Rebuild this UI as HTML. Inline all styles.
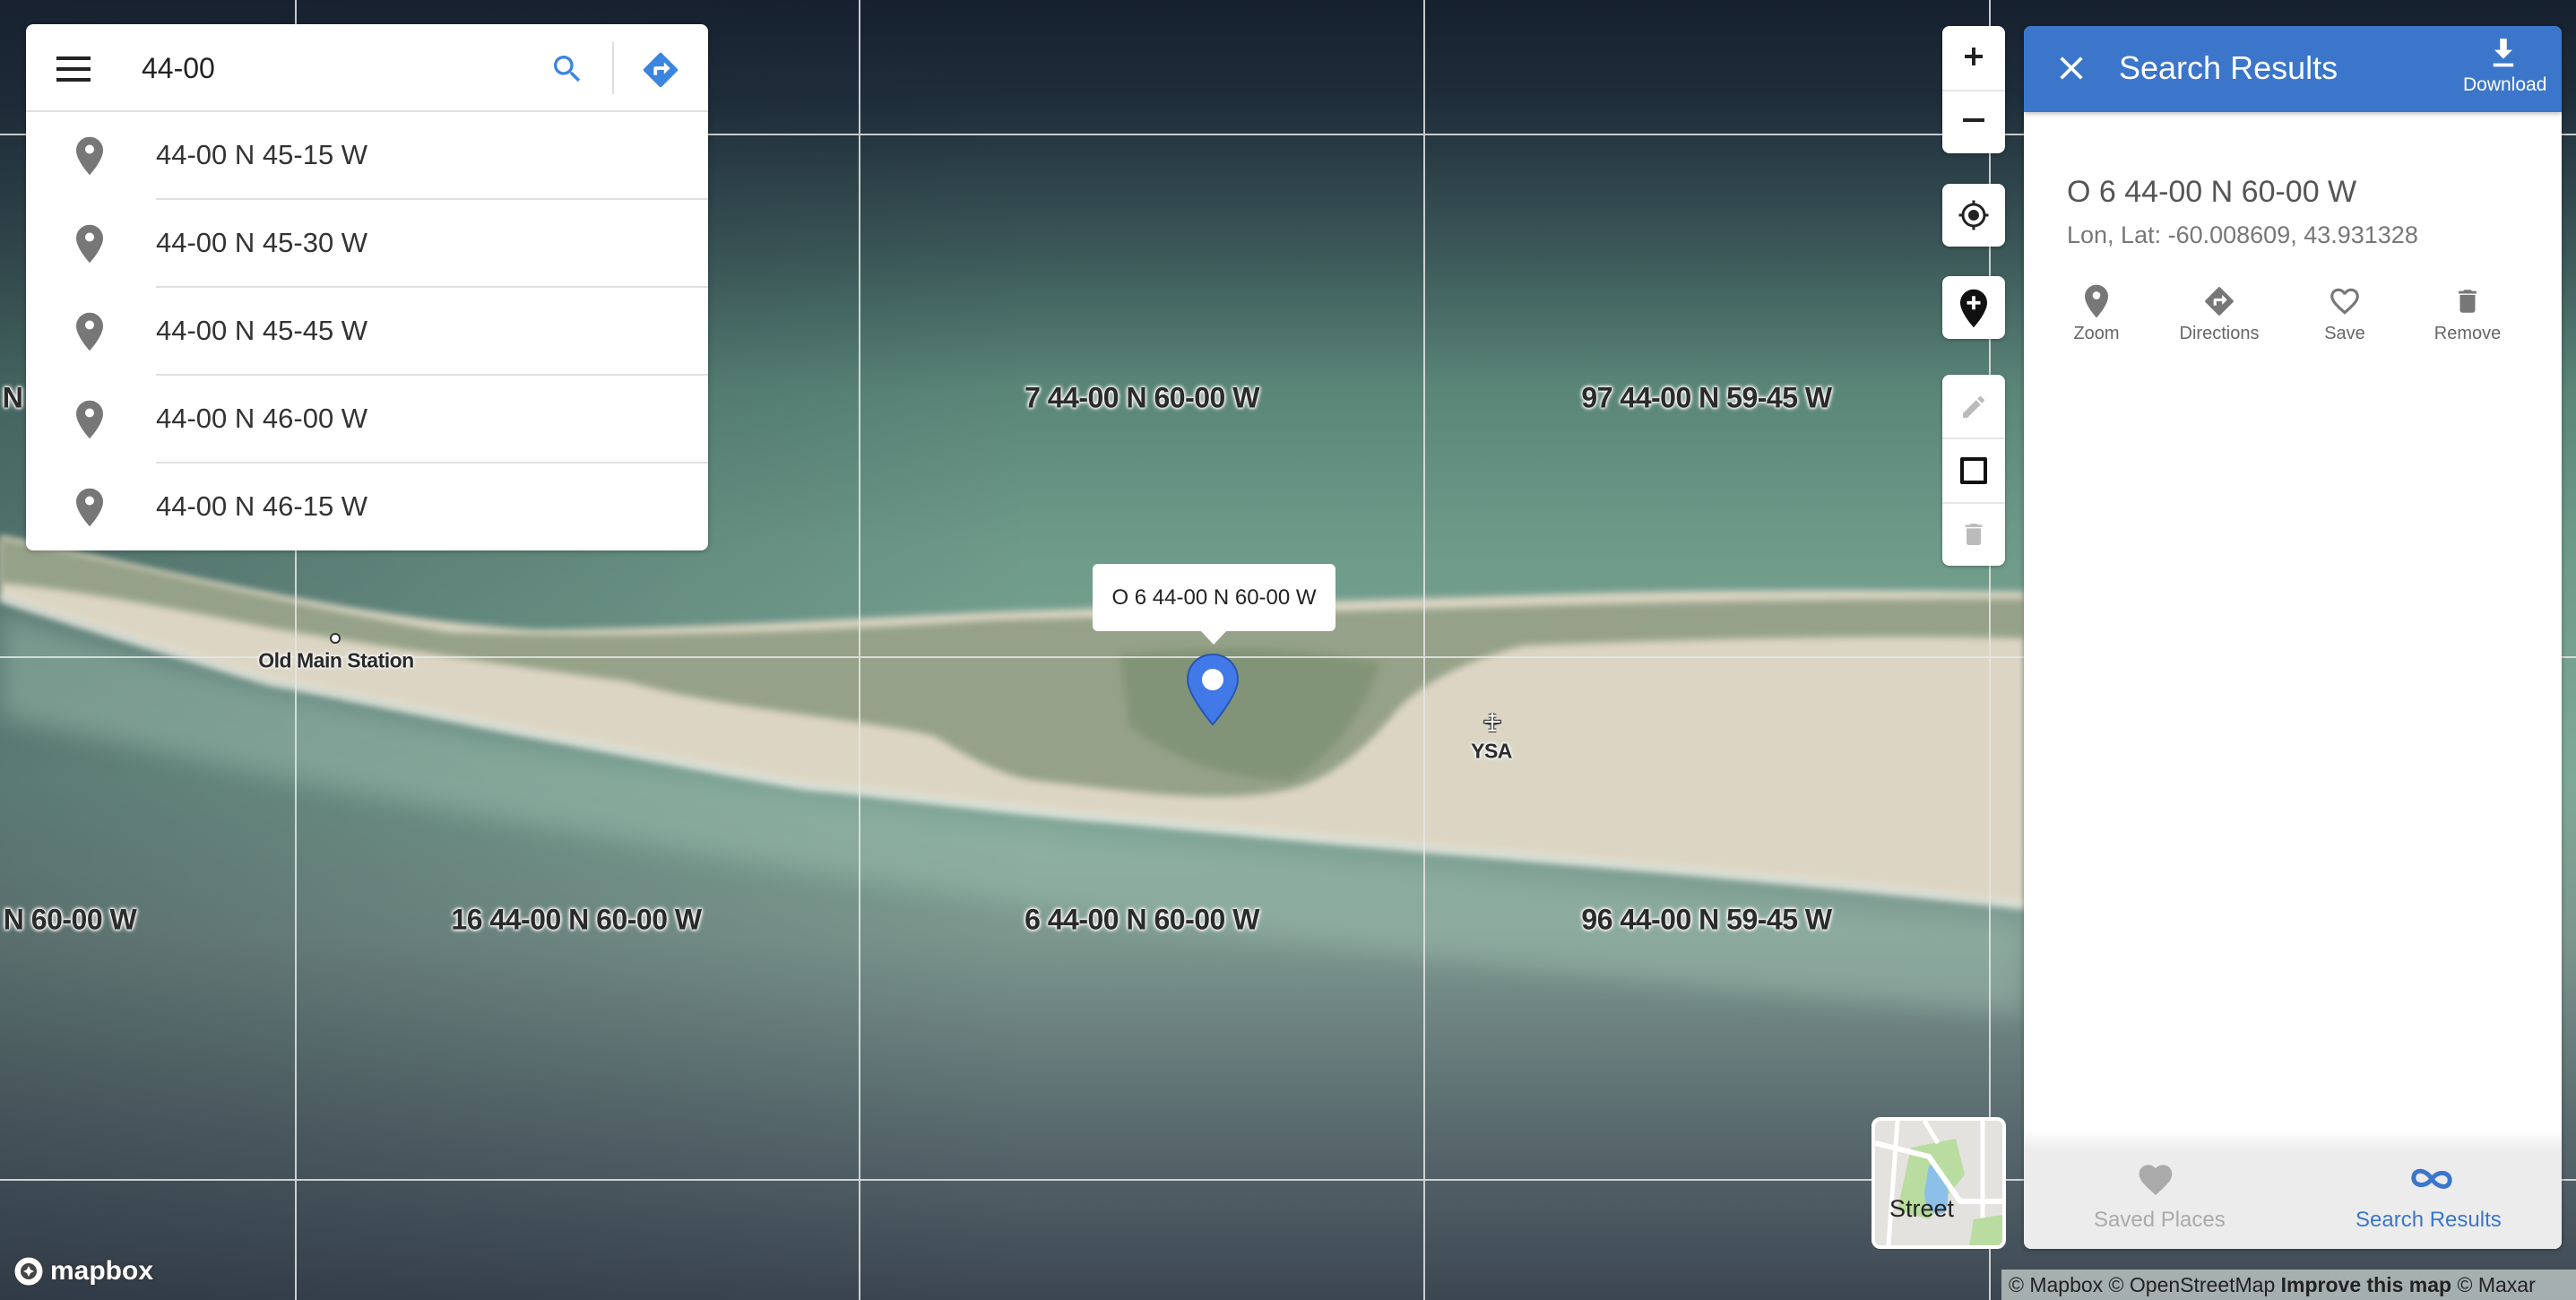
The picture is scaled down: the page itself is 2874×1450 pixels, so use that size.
<!DOCTYPE html>
<html><head><meta charset="utf-8">
<style>
*{margin:0;padding:0;box-sizing:border-box}
html,body{width:2874px;height:1450px;overflow:hidden;font-family:"Liberation Sans",sans-serif}
#map{position:absolute;left:0;top:0;width:2874px;height:1450px}
.lbl{position:absolute;font-family:"Liberation Sans Narrow","Liberation Sans",sans-serif;font-weight:bold;font-size:32px;color:#2a2a2a;white-space:nowrap;transform:translate(-50%,-50%);text-shadow:0 0 3px #fff,0 0 3px #fff,0 0 5px #eee,0 0 6px #ddd;letter-spacing:-0.5px}
.card{position:absolute;background:#fff;border-radius:8px;box-shadow:0 1px 6px rgba(0,0,0,.3)}
.row{position:absolute;left:0;right:0;height:98px}
.row .t{position:absolute;left:145px;top:30px;font-size:31px;color:#333}
.row .ic{position:absolute;left:56px;top:27px}
.row .ln{position:absolute;left:145px;right:0;bottom:0;height:2px;background:#e0e0e0}
.ctl{position:absolute;left:2167px;width:70px;background:#fff;border-radius:8px;box-shadow:0 1px 4px rgba(0,0,0,.3)}
.act{position:absolute;top:288px;width:140px;text-align:center;font-size:20px;color:#666}
.act svg{display:block;margin:0 auto 6px}
</style></head><body>
<svg id="map" width="2874" height="1450" viewBox="0 0 2874 1450">
<defs>
<linearGradient id="sea" x1="0" y1="0" x2="0" y2="1">
<stop offset="0" stop-color="#16202f"/>
<stop offset="0.08" stop-color="#1f2e3b"/>
<stop offset="0.2" stop-color="#3d5a5a"/>
<stop offset="0.3" stop-color="#5a8678"/>
<stop offset="0.42" stop-color="#6e9a8a"/>
<stop offset="0.6" stop-color="#7ea897"/>
<stop offset="0.72" stop-color="#7c978e"/>
<stop offset="0.85" stop-color="#5d6f72"/>
<stop offset="1" stop-color="#3c4652"/>
</linearGradient>
<linearGradient id="side" x1="0" y1="0" x2="1" y2="0">
<stop offset="0" stop-color="#1a2430" stop-opacity="0.35"/>
<stop offset="0.4" stop-color="#1a2430" stop-opacity="0"/>
<stop offset="1" stop-color="#1a2430" stop-opacity="0"/>
</linearGradient>
<filter id="bl" x="-20%" y="-50%" width="140%" height="200%"><feGaussianBlur stdDeviation="14"/></filter>
<filter id="bl2" x="-10%" y="-30%" width="120%" height="160%"><feGaussianBlur stdDeviation="4"/></filter>
</defs>
<rect width="2874" height="1450" fill="url(#sea)"/>
<rect width="2874" height="1450" fill="url(#side)"/>
<!-- south shallow water lighter -->
<path d="M0 680 C300 780 700 860 1200 930 C1700 980 2000 1010 2260 1030 L2260 1130 C1700 1090 900 1000 0 800Z" fill="#9cbcae" opacity="0.5" filter="url(#bl)"/>
<!-- sand band -->
<path d="M0 597 C200 640 400 690 600 703 C800 700 950 690 1100 683 C1300 676 1500 670 1700 664 C1900 657 2100 658 2260 660 L2260 1010 C2000 980 1800 965 1600 947 C1400 930 1300 918 1200 910 C1050 895 950 880 900 877 C750 850 680 835 600 820 C450 790 380 775 300 760 C200 730 100 700 0 667Z" fill="#dcd5c3" filter="url(#bl2)"/>
<!-- vegetation -->
<path d="M0 600 C150 630 300 670 500 705 C700 712 900 705 1100 692 C1300 686 1500 682 1700 676 C1900 670 2100 668 2260 668 L2260 712 C2100 708 1900 712 1700 720 C1620 740 1580 770 1560 790 C1520 840 1480 870 1440 880 C1350 900 1250 880 1150 870 C1100 860 1060 830 1040 820 C950 800 800 790 700 760 C550 740 420 720 300 700 C200 680 100 660 0 650Z" fill="#8e9c82" opacity="0.9" filter="url(#bl2)"/>
<path d="M1250 730 C1350 720 1450 720 1540 740 C1520 800 1480 850 1440 870 C1360 870 1300 840 1260 810Z" fill="#7e9273" opacity="0.8" filter="url(#bl2)"/>
<!-- surf -->
<path d="M0 667 C100 700 200 730 300 760 C380 775 450 790 600 820 C680 835 750 850 900 877 C950 880 1050 895 1200 910 C1300 918 1400 930 1600 947 C1800 965 2000 980 2260 1010" stroke="#eef0ea" stroke-width="9" fill="none" opacity="0.75" filter="url(#bl2)"/>
<!-- grid -->
<g stroke="#e6e6e6" stroke-width="2" opacity="0.85">
<line x1="330" y1="0" x2="330" y2="1450"/><line x1="959" y1="0" x2="959" y2="1450"/>
<line x1="1589" y1="0" x2="1589" y2="1450"/><line x1="2220" y1="0" x2="2220" y2="1450"/>
<line x1="0" y1="150" x2="2874" y2="150"/><line x1="0" y1="733" x2="2874" y2="733"/>
<line x1="0" y1="1316" x2="2874" y2="1316"/>
</g>
<circle cx="374" cy="712" r="5" fill="#fff" stroke="#333" stroke-width="2"/>
</svg>

<div class="lbl" style="left:1274px;top:444px">7 44-00 N 60-00 W</div>
<div class="lbl" style="left:1904px;top:444px">97 44-00 N 59-45 W</div>
<div class="lbl" style="left:14px;top:444px">N</div>
<div class="lbl" style="left:78px;top:1026px">N 60-00 W</div>
<div class="lbl" style="left:643px;top:1026px">16 44-00 N 60-00 W</div>
<div class="lbl" style="left:1274px;top:1026px">6 44-00 N 60-00 W</div>
<div class="lbl" style="left:1904px;top:1026px">96 44-00 N 59-45 W</div>
<div class="lbl" style="left:375px;top:737px;font-size:23px">Old Main Station</div>
<div class="lbl" style="left:1664px;top:838px;font-size:23px">YSA</div>
<svg style="position:absolute;left:1652px;top:793px" width="26" height="26" viewBox="0 0 24 24"><path d="M12 2v4M8 5h8M12 6v10M3 11h18l-9 2zM8 20h8M12 16v4" stroke="#333" stroke-width="4" fill="none"/><path d="M12 2v4M8 5h8M12 6v10M4 11h16M8 20h8M12 16v4" stroke="#fff" stroke-width="2" fill="none"/></svg>

<!-- popup + marker -->
<div style="position:absolute;left:1219px;top:629px;width:271px;height:75px;background:#fff;border-radius:6px;font-size:24px;color:#222;text-align:center;line-height:75px">O 6 44-00 N 60-00 W</div>
<div style="position:absolute;left:1339px;top:703px;width:0;height:0;border-left:15px solid transparent;border-right:15px solid transparent;border-top:16px solid #fff"></div>
<svg style="position:absolute;left:1323px;top:728px" width="60" height="82" viewBox="0 0 60 82"><path d="M30 2C14 2 2 14 2 30c0 18 28 50 28 50s28-32 28-50C58 14 46 2 30 2z" fill="#4179e8" stroke="#2a55b0" stroke-width="2"/><circle cx="30" cy="30" r="12" fill="#fff"/></svg>

<!-- search card -->
<div class="card" style="left:29px;top:27px;width:761px;height:587px;overflow:hidden">
 <div style="position:absolute;left:0;right:0;top:0;height:98px;border-bottom:2px solid #e0e0e0">
  <svg style="position:absolute;left:34px;top:36px" width="38" height="28" viewBox="0 0 38 28"><rect y="0" width="38" height="4" fill="#222"/><rect y="12" width="38" height="4" fill="#222"/><rect y="24" width="38" height="4" fill="#222"/></svg>
  <div style="position:absolute;left:129px;top:31px;font-size:32px;color:#222">44-00</div>
  <svg style="position:absolute;left:584px;top:30px" width="40" height="40" viewBox="0 0 24 24"><path fill="#3b85e0" d="M15.5 14h-.79l-.28-.27A6.47 6.47 0 0 0 16 9.5 6.5 6.5 0 1 0 9.5 16c1.61 0 3.090-.59 4.23-1.57l.27.28v.79l5 4.99L20.49 19l-4.99-5zm-6 0C7.01 14 5 11.99 5 9.5S7.01 5 9.5 5 14 7.01 14 9.5 11.99 14 9.5 14z"/></svg>
  <div style="position:absolute;left:654px;top:20px;width:2px;height:58px;background:#ddd"></div>
  <svg style="position:absolute;left:685px;top:28px" width="46" height="46" viewBox="0 0 24 24"><path fill="#3b85e0" d="M21.71 11.29l-9-9a1 1 0 0 0-1.420 0l-9 9a1 1 0 0 0 0 1.42l9 9a1 1 0 0 0 1.42 0l9-9a1 1 0 0 0 0-1.42zM14 14.5V12h-4v3H8v-4c0-.55.45-1 1-1h5V7.5l3.5 3.5-3.5 3.5z"/></svg>
 </div>
 <div class="row" style="top:98px"><svg class="ic" width="30" height="44" viewBox="0 0 24 34"><path d="M12 0C5.4 0 0 5.4 0 12c0 9 12 22 12 22s12-13 12-22C24 5.4 18.6 0 12 0z" fill="#777"/><circle cx="12" cy="11" r="4" fill="#fff"/></svg><div class="t">44-00 N 45-15 W</div><div class="ln"></div></div>
 <div class="row" style="top:196px"><svg class="ic" width="30" height="44" viewBox="0 0 24 34"><path d="M12 0C5.4 0 0 5.4 0 12c0 9 12 22 12 22s12-13 12-22C24 5.4 18.6 0 12 0z" fill="#777"/><circle cx="12" cy="11" r="4" fill="#fff"/></svg><div class="t">44-00 N 45-30 W</div><div class="ln"></div></div>
 <div class="row" style="top:294px"><svg class="ic" width="30" height="44" viewBox="0 0 24 34"><path d="M12 0C5.4 0 0 5.4 0 12c0 9 12 22 12 22s12-13 12-22C24 5.4 18.6 0 12 0z" fill="#777"/><circle cx="12" cy="11" r="4" fill="#fff"/></svg><div class="t">44-00 N 45-45 W</div><div class="ln"></div></div>
 <div class="row" style="top:392px"><svg class="ic" width="30" height="44" viewBox="0 0 24 34"><path d="M12 0C5.4 0 0 5.4 0 12c0 9 12 22 12 22s12-13 12-22C24 5.4 18.6 0 12 0z" fill="#777"/><circle cx="12" cy="11" r="4" fill="#fff"/></svg><div class="t">44-00 N 46-00 W</div><div class="ln"></div></div>
 <div class="row" style="top:490px"><svg class="ic" width="30" height="44" viewBox="0 0 24 34"><path d="M12 0C5.4 0 0 5.4 0 12c0 9 12 22 12 22s12-13 12-22C24 5.4 18.6 0 12 0z" fill="#777"/><circle cx="12" cy="11" r="4" fill="#fff"/></svg><div class="t">44-00 N 46-15 W</div></div>
</div>

<!-- controls -->
<div class="ctl" style="top:29px;height:142px">
 <svg style="position:absolute;left:23px;top:22px" width="24" height="24" viewBox="0 0 24 24"><path d="M10 2h4v8h8v4h-8v8h-4v-8H2v-4h8z" fill="#222"/></svg>
 <div style="position:absolute;left:0;right:0;top:71px;height:2px;background:#e6e6e6"></div>
 <div style="position:absolute;left:23px;top:103px;width:24px;height:4px;background:#222"></div>
</div>
<div class="ctl" style="top:205px;height:70px">
 <svg style="position:absolute;left:17px;top:17px" width="36" height="36" viewBox="0 0 24 24"><path fill="#222" d="M12 8c-2.21 0-4 1.79-4 4s1.79 4 4 4 4-1.79 4-4-1.79-4-4-4zm8.94 3A8.994 8.994 0 0 0 13 3.06V1h-2v2.06A8.994 8.994 0 0 0 3.06 11H1v2h2.06A8.994 8.994 0 0 0 11 20.94V23h2v-2.06A8.994 8.994 0 0 0 20.94 13H23v-2h-2.06zM12 19c-3.87 0-7-3.13-7-7s3.13-7 7-7 7 3.13 7 7-3.13 7-7 7z"/></svg>
</div>
<div class="ctl" style="top:308px;height:70px">
 <svg style="position:absolute;left:20px;top:14px" width="30" height="44" viewBox="0 0 24 34"><path d="M12 0C5.4 0 0 5.4 0 12c0 9 12 22 12 22s12-13 12-22C24 5.4 18.6 0 12 0z" fill="#111"/><path d="M10.5 6h3v4.5H18v3h-4.5V18h-3v-4.5H6v-3h4.5z" fill="#fff"/></svg>
</div>
<div class="ctl" style="top:418px;height:213px">
 <svg style="position:absolute;left:19px;top:20px" width="32" height="32" viewBox="0 0 24 24"><path fill="#bbb" d="M3 17.25V21h3.75L17.81 9.94l-3.75-3.75L3 17.25zM20.71 7.04a1 1 0 0 0 0-1.41l-2.34-2.34a1 1 0 0 0-1.41 0l-1.83 1.83 3.75 3.75 1.83-1.83z"/></svg>
 <div style="position:absolute;left:0;right:0;top:70px;height:2px;background:#e6e6e6"></div>
 <div style="position:absolute;left:20px;top:92px;width:30px;height:30px;border:4px solid #111;border-radius:2px"></div>
 <div style="position:absolute;left:0;right:0;top:142px;height:2px;background:#e6e6e6"></div>
 <svg style="position:absolute;left:19px;top:160px" width="32" height="36" viewBox="0 0 24 24"><path fill="#bbb" d="M6 19c0 1.1.9 2 2 2h8c1.1 0 2-.9 2-2V7H6v12zM19 4h-3.5l-1-1h-5l-1 1H5v2h14V4z"/></svg>
</div>

<!-- street thumbnail -->
<div style="position:absolute;left:2088px;top:1246px;width:150px;height:147px;border:4px solid #fff;border-radius:10px;overflow:hidden;background:#e4e2de">
 <svg width="142" height="139" viewBox="0 0 142 139" style="position:absolute;left:0;top:0">
  <path d="M40 30 L90 20 L100 60 L60 110 L25 100Z" fill="#b9dca0"/>
  <path d="M60 50 C75 45 85 70 80 100 C70 110 55 100 55 80Z" fill="#8cc0e8"/>
  <path d="M0 25 L60 40 L95 90 L142 90" stroke="#fff" stroke-width="6" fill="none"/>
  <path d="M25 0 L15 139 M55 0 L70 25 M120 0 L120 139" stroke="#fff" stroke-width="5" fill="none"/>
  <path d="M110 110 L142 105 L142 139 L105 139Z" fill="#b9dca0"/>
 </svg>
 <div style="position:absolute;left:16px;top:83px;font-size:27px;color:#222">Street</div>
</div>

<!-- right panel -->
<div class="card" style="left:2258px;top:29px;width:600px;height:1364px;overflow:hidden">
 <div style="position:absolute;left:0;right:0;top:0;height:96px;background:#3b76cb;box-shadow:0 2px 5px rgba(0,0,0,.25)">
  <svg style="position:absolute;left:36px;top:30px" width="34" height="34" viewBox="0 0 24 24"><path d="M4 4L20 20M20 4L4 20" stroke="#fff" stroke-width="2.6"/></svg>
  <div style="position:absolute;left:106px;top:26px;font-size:36px;color:#fff">Search Results</div>
  <svg style="position:absolute;left:520px;top:14px" width="30" height="34" viewBox="0 0 24 27"><path d="M9 0h6v10h5l-8 8-8-8h5z" fill="#fff"/><rect x="3" y="22" width="18" height="3" fill="#fff"/></svg>
  <div style="position:absolute;left:490px;top:54px;font-size:21px;color:#fff">Download</div>
 </div>
 <div style="position:absolute;left:48px;top:166px;font-size:34px;color:#555">O 6 44-00 N 60-00 W</div>
 <div style="position:absolute;left:48px;top:218px;font-size:27px;color:#777">Lon, Lat: -60.008609, 43.931328</div>
 <div class="act" style="left:11px"><svg width="26" height="38" viewBox="0 0 24 34"><path d="M12 0C5.4 0 0 5.4 0 12c0 9 12 22 12 22s12-13 12-22C24 5.4 18.6 0 12 0z" fill="#777"/><circle cx="12" cy="11" r="4" fill="#fff"/></svg>Zoom</div>
 <div class="act" style="left:148px"><svg width="38" height="38" viewBox="0 0 24 24"><path fill="#777" d="M21.71 11.29l-9-9a1 1 0 0 0-1.42 0l-9 9a1 1 0 0 0 0 1.42l9 9a1 1 0 0 0 1.42 0l9-9a1 1 0 0 0 0-1.42zM14 14.5V12h-4v3H8v-4c0-.55.45-1 1-1h5V7.5l3.5 3.5-3.5 3.5z"/></svg>Directions</div>
 <div class="act" style="left:288px"><svg width="38" height="38" viewBox="0 0 24 24"><path fill="#777" d="M16.5 3c-1.74 0-3.41.81-4.5 2.09C10.91 3.81 9.24 3 7.5 3 4.42 3 2 5.42 2 8.5c0 3.78 3.4 6.86 8.55 11.54L12 21.35l1.45-1.320C18.6 15.36 22 12.28 22 8.5 22 5.42 19.58 3 16.5 3zm-4.4 15.55l-.1.1-.1-.1C7.14 14.24 4 11.39 4 8.5 4 6.5 5.5 5 7.5 5c1.54 0 3.04.99 3.57 2.36h1.87C13.46 5.990 14.96 5 16.5 5c2 0 3.5 1.5 3.5 3.5 0 2.89-3.14 5.74-7.9 10.05z"/></svg>Save</div>
 <div class="act" style="left:425px"><svg width="34" height="38" viewBox="0 0 24 24"><path fill="#777" d="M6 19c0 1.1.9 2 2 2h8c1.1 0 2-.9 2-2V7H6v12zM19 4h-3.5l-1-1h-5l-1 1H5v2h14V4z"/></svg>Remove</div>
 <div style="position:absolute;left:0;right:0;top:1230px;height:25px;background:linear-gradient(#fff,#ececec)"></div>
 <div style="position:absolute;left:0;right:0;top:1254px;bottom:0;background:#ececec">
  <svg style="position:absolute;left:125px;top:10px" width="44" height="42" viewBox="0 0 24 22"><path fill="#aaa" d="M12 21.35l-1.45-1.32C5.4 15.36 2 12.28 2 8.5 2 5.42 4.42 3 7.5 3c1.74 0 3.41.81 4.5 2.090C13.09 3.81 14.76 3 16.5 3 19.58 3 22 5.42 22 8.5c0 3.78-3.4 6.86-8.55 11.54z"/></svg>
  <div style="position:absolute;left:78px;top:64px;font-size:24px;color:#aaa">Saved Places</div>
  <svg style="position:absolute;left:429px;top:17px" width="52" height="30" viewBox="0 0 52 30"><path d="M26 15 C20 5 8 3 6 12 C4 22 18 26 26 15 C34 4 48 8 46 18 C44 27 32 24 26 15Z" fill="none" stroke="#3b76cb" stroke-width="5"/></svg>
  <div style="position:absolute;left:370px;top:64px;font-size:24px;color:#3b76cb">Search Results</div>
 </div>
</div>

<!-- mapbox logo -->
<div style="position:absolute;left:14px;top:1398px;height:40px;display:flex;align-items:center;gap:6px">
 <svg width="36" height="36" viewBox="0 0 36 36"><circle cx="18" cy="18" r="16" fill="#fff" stroke="#333" stroke-width="1"/><circle cx="18" cy="18" r="9" fill="#444"/><path d="M18 12l2 4 4 2-4 2-2 4-2-4-4-2 4-2z" fill="#fff"/></svg>
 <span style="font-size:30px;font-weight:bold;color:#fff;text-shadow:0 0 2px #333,0 0 3px #333">mapbox</span>
</div>
<!-- attribution -->
<div style="position:absolute;left:2233px;top:1416px;width:641px;height:34px;background:rgba(200,210,205,.75);font-size:23px;color:#222;line-height:34px;padding-left:8px;white-space:nowrap;overflow:hidden">© Mapbox © OpenStreetMap <b>Improve this map</b> © Maxar</div>
</body></html>
